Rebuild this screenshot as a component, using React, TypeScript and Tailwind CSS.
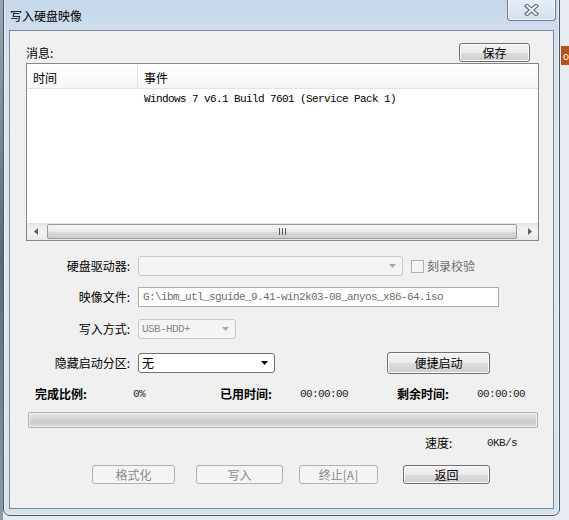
import type { ReactNode } from "react";

const cjk = "font-['Noto_Sans_CJK_SC',sans-serif]";
const mono = "font-['Liberation_Mono','Noto_Sans_CJK_SC',monospace] text-[11px] tracking-[-0.6px]";

// win7 style push button
function WinButton({
  children,
  disabled = false,
  className = "",
}: {
  children: ReactNode;
  disabled?: boolean;
  className?: string;
}) {
  return (
    <div
      className={`flex items-center justify-center rounded-[3px] border text-[12px] leading-[14px] ${
        disabled
          ? "border-[#adb2b5] bg-[#f4f4f4] text-[#8a8a8a]"
          : "border-[#707070] bg-[linear-gradient(#f2f2f2_0%,#ebebeb_50%,#dddddd_50%,#cfcfcf_100%)] text-black shadow-[inset_0_0_0_1px_#fbfbfb]"
      } ${className}`}
    >
      {children}
    </div>
  );
}

function DownArrow({ dark = false }: { dark?: boolean }) {
  return (
    <svg width="7" height="4" viewBox="0 0 7 4">
      <path d="M0 0h7L3.5 4z" fill={dark ? "#000" : "#a7a7a7"} />
    </svg>
  );
}

function Combo({
  width,
  text,
  disabled = true,
}: {
  width: string;
  text?: string;
  disabled?: boolean;
}) {
  return (
    <div
      className={`flex h-[20px] items-center justify-between rounded-[3px] border pl-[3px] pr-[6px] ${width} ${
        disabled ? "border-[#c6c9cc] bg-[#f4f4f4]" : "border-[#707070] bg-white"
      }`}
    >
      <span className={disabled ? `${mono} text-[#8a8a8a]` : "text-[12px] text-black"}>{text}</span>
      <DownArrow dark={!disabled} />
    </div>
  );
}

function Label({ children }: { children: ReactNode }) {
  return <div className="w-[104px] shrink-0 text-right text-[12px] leading-[14px] text-black">{children}</div>;
}

export default function App() {
  return (
    <div className={`relative h-[520px] w-[569px] overflow-hidden bg-[#e6ecf2] ${cjk}`}>
      {/* bits of desktop behind */}
      <div className="absolute left-0 top-0 h-[520px] w-[3px] bg-[linear-gradient(#9aa6b0,#5d6a74,#8e9aa4)]" />
      <div className="absolute left-[561px] top-[46px] flex h-[19px] w-[10px] items-center bg-[#b5521e] pl-[2px] text-[10px] leading-none text-white">
        o
      </div>

      {/* dialog window */}
      <div className="absolute left-[3px] top-[-6px] flex h-[522px] w-[557px] flex-col rounded-[7px] border border-[#4a5663] bg-[linear-gradient(180deg,#c3d6e9_0%,#d5e3f0_12%,#dce8f3_60%,#d4e2ef_100%)] shadow-[inset_0_0_0_1px_rgba(255,255,255,0.55)]">
        <div className="relative h-[35px] shrink-0 pl-[6px] pt-[14px] text-[12px] leading-[14px] text-black">
          写入硬盘映像
          <div className="absolute right-[3px] top-0 flex h-[26px] w-[49px] items-center justify-center rounded-b-[4px] border border-t-0 border-[#6f7f8f] bg-[linear-gradient(#eaf1f8,#d3e1ee)] pt-[5px] shadow-[inset_0_0_0_1px_rgba(255,255,255,0.6)]">
            <svg width="15" height="12" viewBox="0 0 15 12">
              <path d="M3 2l9 8M12 2l-9 8" stroke="#5f6873" strokeWidth="4.2" strokeLinecap="square" />
              <path d="M3 2l9 8M12 2l-9 8" stroke="#f4f6f8" strokeWidth="2" strokeLinecap="square" />
            </svg>
          </div>
        </div>

        {/* client area */}
        <div className="mx-[5px] flex h-[479px] shrink-0 flex-col border border-[#7d8791] bg-[#f0f0f0] pl-[16px] pr-[14px] pt-[12px] text-[12px] leading-[14px]">
          <div className="flex h-[19px] items-center justify-between">
            <span>消息:</span>
            <WinButton className="mr-[9px] h-[19px] w-[71px]">保存</WinButton>
          </div>

          {/* message list */}
          <div className="mt-[1px] flex h-[178px] flex-col border border-[#828790] bg-white">
            <div className="flex h-[25px] border-b border-[#e2e3e5] bg-[linear-gradient(#ffffff,#f5f6f7)]">
              <div className="w-[111px] border-r border-[#e3e5e8] pl-[6px] pt-[7px]">时间</div>
              <div className="pl-[6px] pt-[7px]">事件</div>
            </div>
            <div className="flex pt-[2px] leading-[16px]">
              <div className="w-[111px]" />
              <div className={`pl-[6px] ${mono} text-black`}>Windows 7 v6.1 Build 7601 (Service Pack 1)</div>
            </div>
            <div className="flex-1" />
            <div className="flex h-[17px] bg-[linear-gradient(#e3e3e3,#f0f0f0_30%,#f0f0f0_70%,#e6e6e6)]">
              <div className="flex w-[17px] items-center justify-center">
                <svg width="4" height="7" viewBox="0 0 4 7">
                  <path d="M4 0v7L0 3.5z" fill="#606060" />
                </svg>
              </div>
              <div className="flex flex-1 py-[1px] pl-[3px] pr-[4px]">
                <div className="flex flex-1 items-center justify-center rounded-[2px] border border-[#9b9b9b] bg-[linear-gradient(#f6f6f6,#e9e9e9_50%,#d9d9d9_55%,#cfcfcf)]">
                  <div className="flex gap-[2px]">
                    <div className="h-[7px] w-[1px] bg-[#5a5a5a]" />
                    <div className="h-[7px] w-[1px] bg-[#5a5a5a]" />
                    <div className="h-[7px] w-[1px] bg-[#5a5a5a]" />
                  </div>
                </div>
              </div>
              <div className="flex w-[17px] items-center justify-center">
                <svg width="4" height="7" viewBox="0 0 4 7">
                  <path d="M0 0v7L4 3.5z" fill="#606060" />
                </svg>
              </div>
            </div>
          </div>

          {/* settings */}
          <div className="mt-[15px] flex h-[20px] items-center">
            <Label>硬盘驱动器:</Label>
            <div className="ml-[8px]">
              <Combo width="w-[265px]" />
            </div>
            <div className="ml-[8px] h-[13px] w-[13px] border border-[#b1b1b1] bg-[#f4f4f4]" />
            <span className="ml-[3px] text-[#6d6d6d]">刻录校验</span>
          </div>

          <div className="mt-[11px] flex h-[20px] items-center">
            <Label>映像文件:</Label>
            <div className={`ml-[8px] flex h-[20px] w-[361px] items-center border border-[#abadb3] bg-white pl-[4px] ${mono} text-[#6d6d6d]`}>
              G:\ibm_utl_sguide_9.41-win2k03-08_anyos_x86-64.iso
            </div>
          </div>

          <div className="mt-[12px] flex h-[20px] items-center">
            <Label>写入方式:</Label>
            <div className="ml-[8px]">
              <Combo width="w-[98px]" text="USB-HDD+" />
            </div>
          </div>

          <div className="mt-[13px] flex h-[22px] items-center">
            <Label>隐藏启动分区:</Label>
            <div className="ml-[8px]">
              <Combo width="w-[137px]" text="无" disabled={false} />
            </div>
            <WinButton className="ml-[112px] h-[22px] w-[103px]">便捷启动</WinButton>
          </div>

          {/* progress info */}
          <div className="mt-[13px] flex h-[14px] items-center">
            <span className="ml-[9px] w-[98px] font-semibold">完成比例:</span>
            <span className={`w-[87px] ${mono} text-[#222]`}>0%</span>
            <span className="w-[80px] font-semibold">已用时间:</span>
            <span className={`w-[97px] ${mono} text-[#222]`}>00:00:00</span>
            <span className="w-[80px] font-semibold">剩余时间:</span>
            <span className={`${mono} text-[#222]`}>00:00:00</span>
          </div>

          <div className="ml-[2px] mr-[1px] mt-[11px] h-[16px] rounded-[2px] border border-[#b2b2b2] bg-[linear-gradient(#e9e9e9,#d6d6d6_40%,#cdcdcd_60%,#dcdcdc)] shadow-[inset_0_0_0_1px_#ececec]" />

          <div className="mt-[8px] flex h-[14px] items-center">
            <span className="ml-[399px] w-[62px]">速度:</span>
            <span className={`${mono} text-[#222]`}>0KB/s</span>
          </div>

          <div className="mt-[15px] flex h-[19px]">
            <WinButton disabled className="ml-[66px] w-[83px]">
              格式化
            </WinButton>
            <WinButton disabled className="ml-[21px] w-[87px]">
              写入
            </WinButton>
            <WinButton disabled className="ml-[16px] w-[79px]">
              终止[A]
            </WinButton>
            <WinButton className="ml-[25px] w-[87px]">返回</WinButton>
          </div>
        </div>
      </div>
    </div>
  );
}
